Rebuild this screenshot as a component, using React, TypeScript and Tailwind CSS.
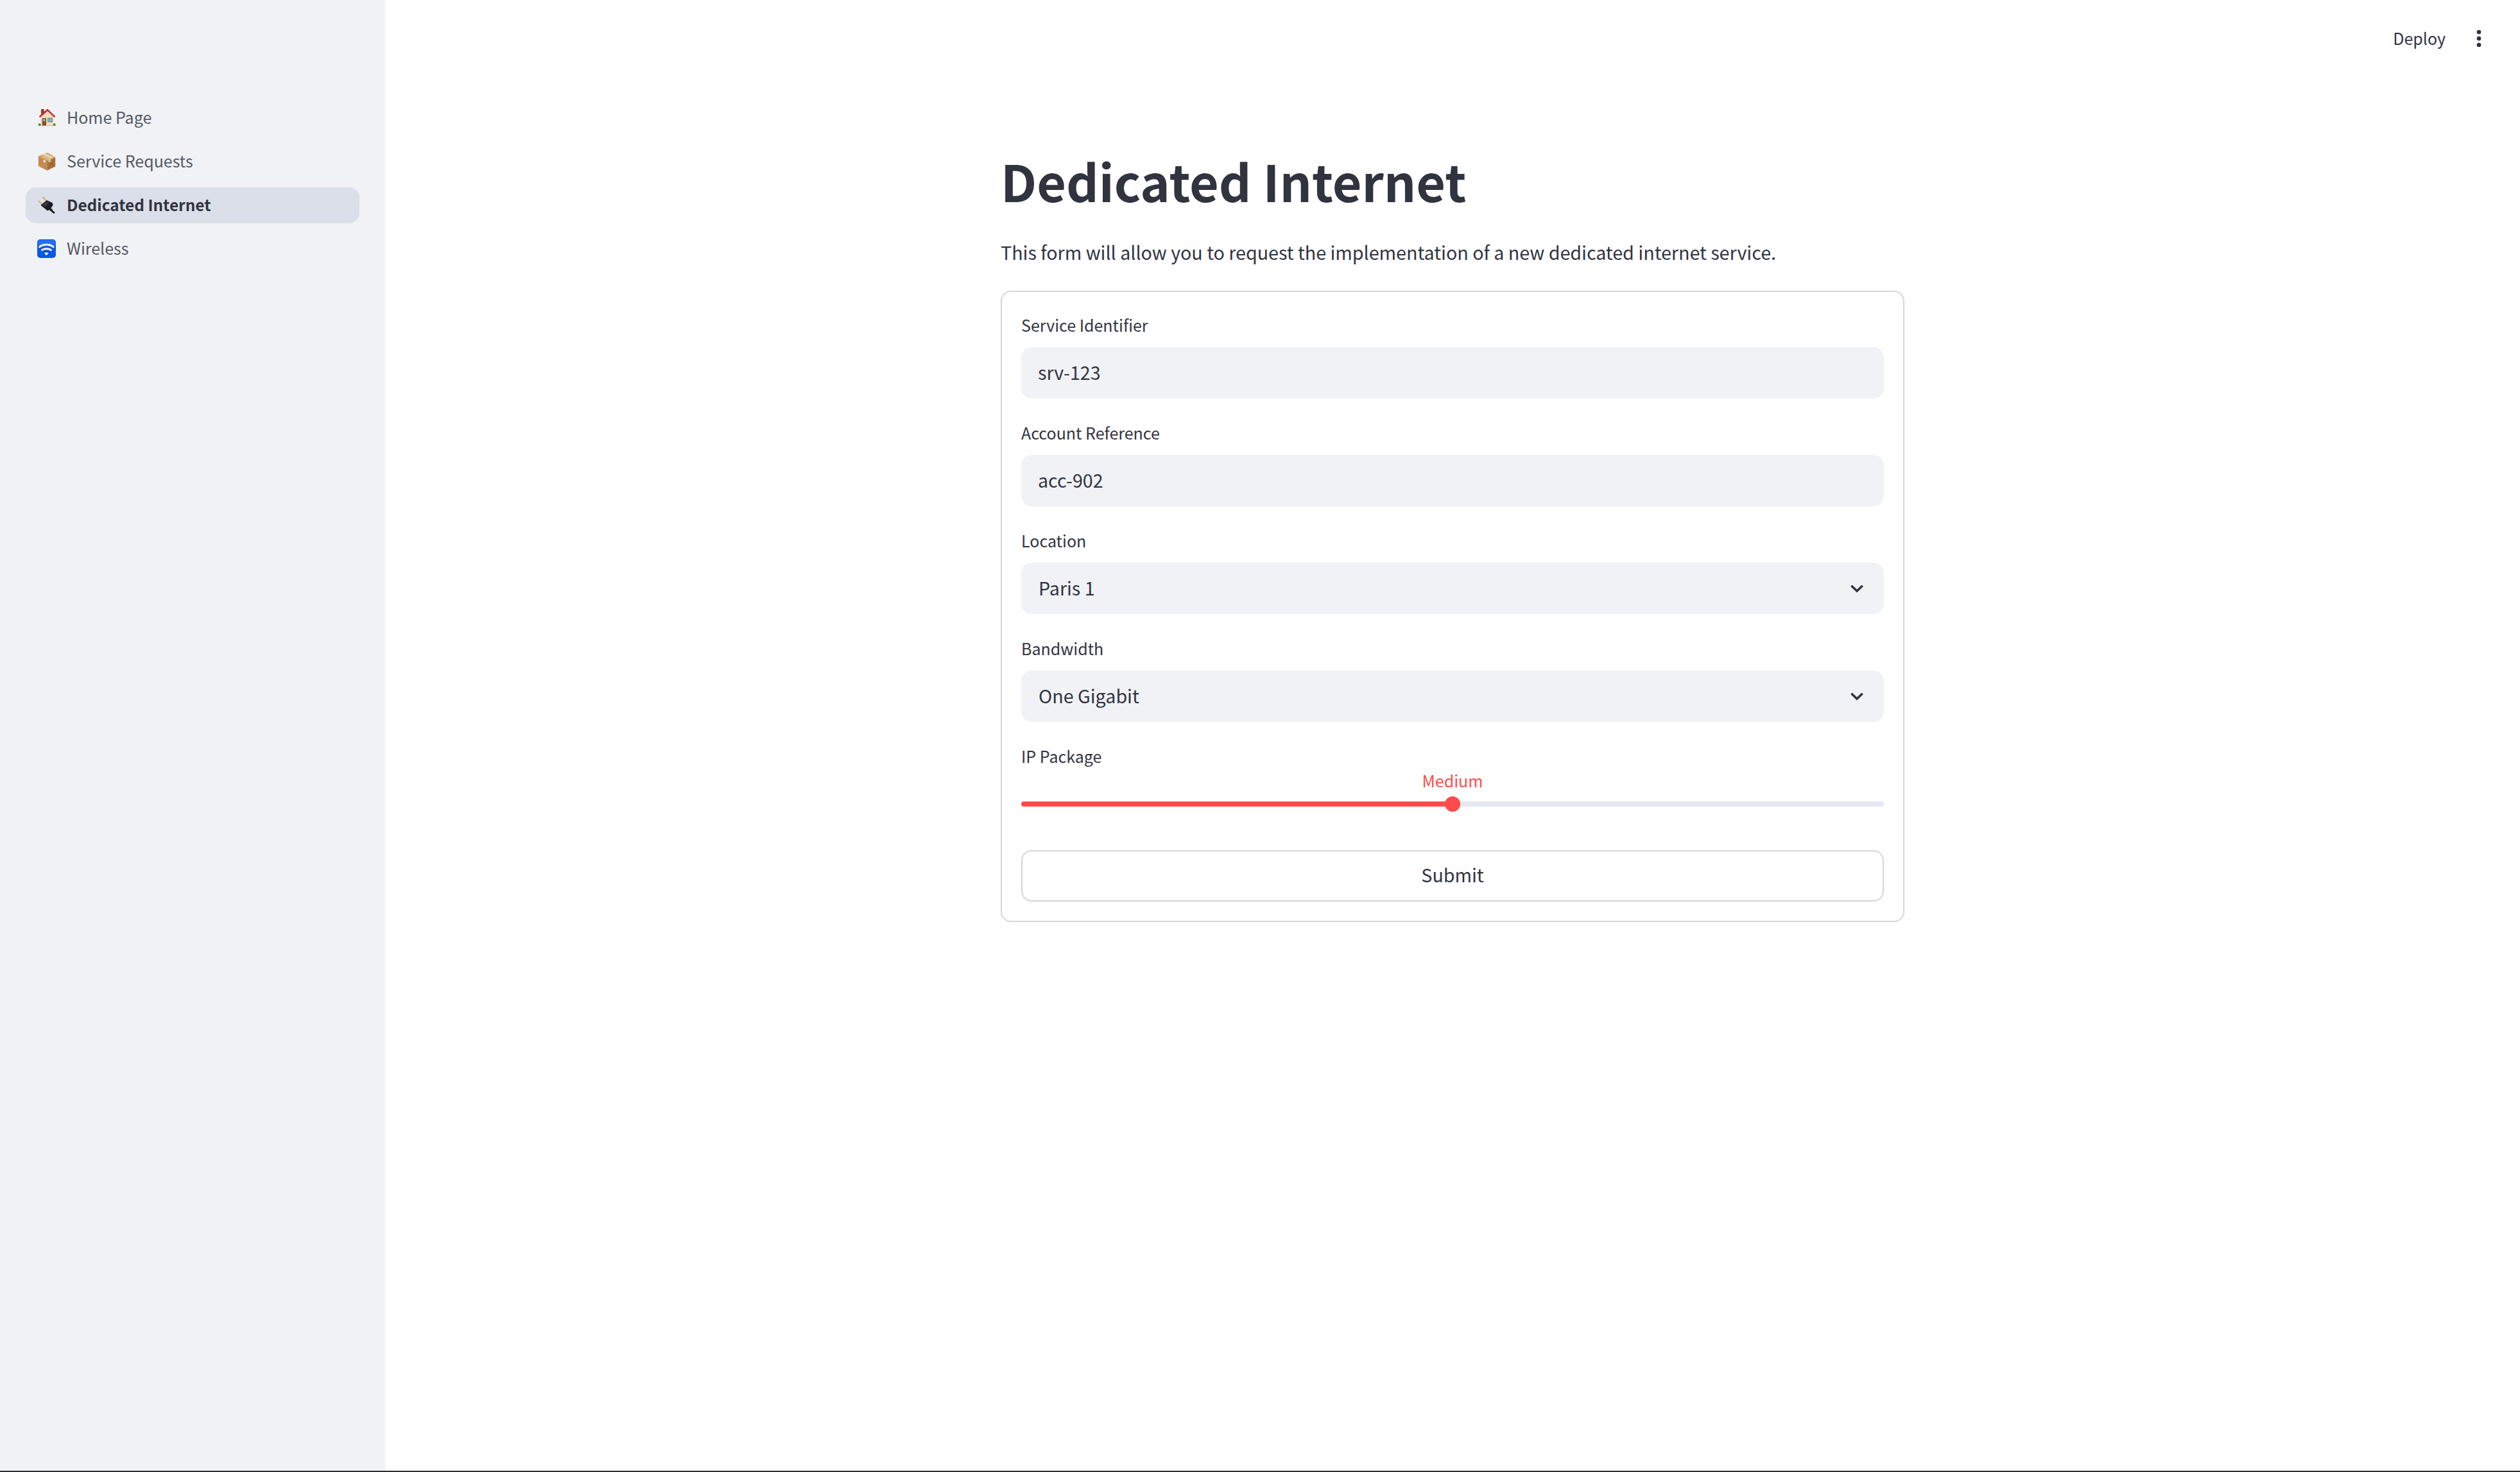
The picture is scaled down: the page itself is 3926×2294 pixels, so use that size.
import type { ReactNode } from 'react';

function HouseIcon() {
  return (
    <svg viewBox="55 25 84 84" className="h-[28px] w-[28px]">
      <rect x="70" y="28" width="14" height="26" fill="#a5342c" />
      <path d="M68 62h60v42H68z" fill="#f0d9ae" />
      <path d="M100 40 68 66v38h60V66z" fill="#f3dfba" />
      <path d="M100 27 60 62l5 6 35-30 32 30 5-6z" fill="#c9302c" />
      <path d="M100 27 84 41l-2 4 18-14 14 10z" fill="#3a2a2a" opacity="0.5" />
      <rect x="75" y="70" width="19" height="35" fill="#8a4a2c" />
      <rect x="80" y="74" width="9" height="11" fill="#8fc4dc" />
      <rect x="101" y="69" width="22" height="20" fill="#6d5a48" />
      <rect x="103" y="71" width="18" height="16" fill="#6fb4dc" />
      <circle cx="63" cy="101" r="6" fill="#4c8c2b" />
      <circle cx="132" cy="101" r="6" fill="#4c8c2b" />
      <rect x="66" y="104" width="64" height="3" fill="#9a8f80" opacity="0.6" />
    </svg>
  );
}

function BoxIcon() {
  return (
    <svg viewBox="55 23 84 88" className="h-[29px] w-[28px]">
      <path d="M100 25 57 42l41 22 39-17z" fill="#d9a468" />
      <path d="M57 42v47l41 21V64z" fill="#c48a4e" />
      <path d="M137 47v44l-39 19V64z" fill="#a86f38" />
      <path d="m76 34 40 20 13-6-39-19z" fill="#ecd3ac" />
      <path d="m76 34 40 20v14l-12 5V60L76 45z" fill="#d8bc94" />
      <path d="M80 62h10v12l-10-5z" fill="#f4efe8" />
      <path d="m116 76 8-4v8l-8 4z" fill="#8a5a2c" />
    </svg>
  );
}

function PlugIcon() {
  return (
    <svg viewBox="50 23 94 92" className="h-[31px] w-[31px]">
      <path d="m76 28 24 22M56 48l24 22" stroke="#d4b13c" strokeWidth="5.5" fill="none" />
      <path d="M68 70 98 45l28 13 4 11-15 23-13 6-32-26z" fill="#1e1e22" />
      <path d="m76 70 23-19 10 7-22 21z" fill="#3a3a3f" />
      <path d="m112 84 10 6 18 18-6 5-18-15-8-8z" fill="#111114" />
      <circle cx="122" cy="92" r="5" fill="#2c2c30" />
    </svg>
  );
}

function WifiIcon() {
  return (
    <svg viewBox="55 25 85 85" className="h-[29px] w-[29px]">
      <rect x="55" y="25" width="85" height="85" rx="14" fill="#0b57e8" />
      <rect x="58" y="28" width="79" height="30" rx="11" fill="#3f82f5" opacity="0.55" />
      <path d="M65 60c18-15 46-15 64 0" stroke="#fff" strokeWidth="8" strokeLinecap="round" fill="none" />
      <path d="M77 74c11-8 30-8 41 0" stroke="#fff" strokeWidth="8" strokeLinecap="round" fill="none" />
      <path d="M87 88c5-4 15-4 20 0l-10 10z" fill="#fff" />
    </svg>
  );
}

const navItems = [
  { label: 'Home Page', icon: <HouseIcon /> },
  { label: 'Service Requests', icon: <BoxIcon /> },
  { label: 'Dedicated Internet', icon: <PlugIcon />, active: true },
  { label: 'Wireless', icon: <WifiIcon /> },
];

function Sidebar() {
  return (
    <aside className="w-[600px] shrink-0 bg-[#f0f2f6] px-[40px] pt-[156px]">
      <nav className="flex flex-col gap-[12px]">
        {navItems.map((item) => (
          <a
            key={item.label}
            className={`flex h-[56px] items-center gap-[17px] rounded-[16px] pb-[2px] pl-[18px] ${
              item.active ? 'bg-[#dbdfe9] text-[24.4px] font-semibold text-[#31333f]' : 'text-[25px] text-[#565862]'
            }`}
          >
            <span className="flex w-[29px] justify-center">{item.icon}</span>
            {item.label}
          </a>
        ))}
      </nav>
    </aside>
  );
}

function Field({ label, children }: { label: string; children: ReactNode }) {
  return (
    <div>
      <label className="block h-[56px] text-[25px] leading-[42px] text-[#31333f]">{label}</label>
      {children}
    </div>
  );
}

function TextField({ label, value }: { label: string; value: string }) {
  return (
    <Field label={label}>
      <input
        readOnly
        defaultValue={value}
        className="block h-[80px] w-full rounded-[16px] bg-[#f0f2f6] pb-[4px] pl-[26px] text-[28.65px] text-[#31333f] outline-none"
      />
    </Field>
  );
}

function SelectField({ label, value }: { label: string; value: string }) {
  return (
    <Field label={label}>
      <div className="flex h-[80px] items-center justify-between rounded-[16px] bg-[#f0f2f6] pl-[27px] pr-[32px] text-[28.65px] text-[#31333f]">
        <span className="pb-[2px]">{value}</span>
        <svg viewBox="0 0 20 13" className="h-[13px] w-[20px]" fill="none" stroke="#31333f" strokeWidth="3.6">
          <path d="M1.3 1.8 10 10l8.7-8.2" />
        </svg>
      </div>
    </Field>
  );
}

function SliderField() {
  return (
    <div className="h-[136px]">
      <label className="block h-[84px] text-[25px] leading-[42px] text-[#31333f]">IP Package</label>
      <div className="relative mt-[8px] h-[8px] rounded-full bg-[#e4e8f1]">
        <div className="h-full w-1/2 rounded-l-full bg-[#ff4b4b]" />
        <div className="absolute left-1/2 top-[-8px] h-[24px] w-[24px] -translate-x-1/2 rounded-full bg-[#ff4b4b]" />
        <span className="absolute bottom-[20px] left-1/2 -translate-x-1/2 text-[25px] leading-[42px] text-[#ff4b4b]">
          Medium
        </span>
      </div>
    </div>
  );
}

function Header() {
  return (
    <header className="flex h-[120px] items-center justify-end pr-[60px] text-[#31333f]">
      <span className="mr-[48px] text-[25px]">Deploy</span>
      <svg viewBox="0 0 8 28" className="h-[28px] w-[8px]" fill="#31333f">
        <circle cx="4" cy="4" r="3.3" />
        <circle cx="4" cy="14" r="3.3" />
        <circle cx="4" cy="24" r="3.3" />
      </svg>
    </header>
  );
}

export default function App() {
  return (
    <div className="flex h-screen w-screen flex-col overflow-hidden bg-white font-['Noto_Sans_CJK_SC',sans-serif]">
      <div className="flex min-h-0 flex-1">
        <Sidebar />
        <main className="min-w-0 flex-1">
          <Header />
          <div className="mx-auto mt-[108px] w-[1408px]">
            <h1 className="h-[106px] text-[78.8px] font-bold leading-[106px] text-[#31333f]">Dedicated Internet</h1>
            <p className="mt-[35px] text-[28.65px] leading-[48px] text-[#31333f]">
              This form will allow you to request the implementation of a new dedicated internet service.
            </p>
            <form className="mt-[36px] flex h-[984px] flex-col gap-[32px] rounded-[16px] border-2 border-[#d5d6d8] px-[30px] pt-[30px]">
              <TextField label="Service Identifier" value="srv-123" />
              <TextField label="Account Reference" value="acc-902" />
              <SelectField label="Location" value="Paris 1" />
              <SelectField label="Bandwidth" value="One Gigabit" />
              <SliderField />
              <button
                type="button"
                className="h-[80px] rounded-[16px] border-2 border-[#d5d6d8] bg-white pb-[3px] text-[28.65px] text-[#31333f]"
              >
                Submit
              </button>
            </form>
          </div>
        </main>
      </div>
      <div className="h-[2px] bg-[#2e2e2e]" />
    </div>
  );
}
